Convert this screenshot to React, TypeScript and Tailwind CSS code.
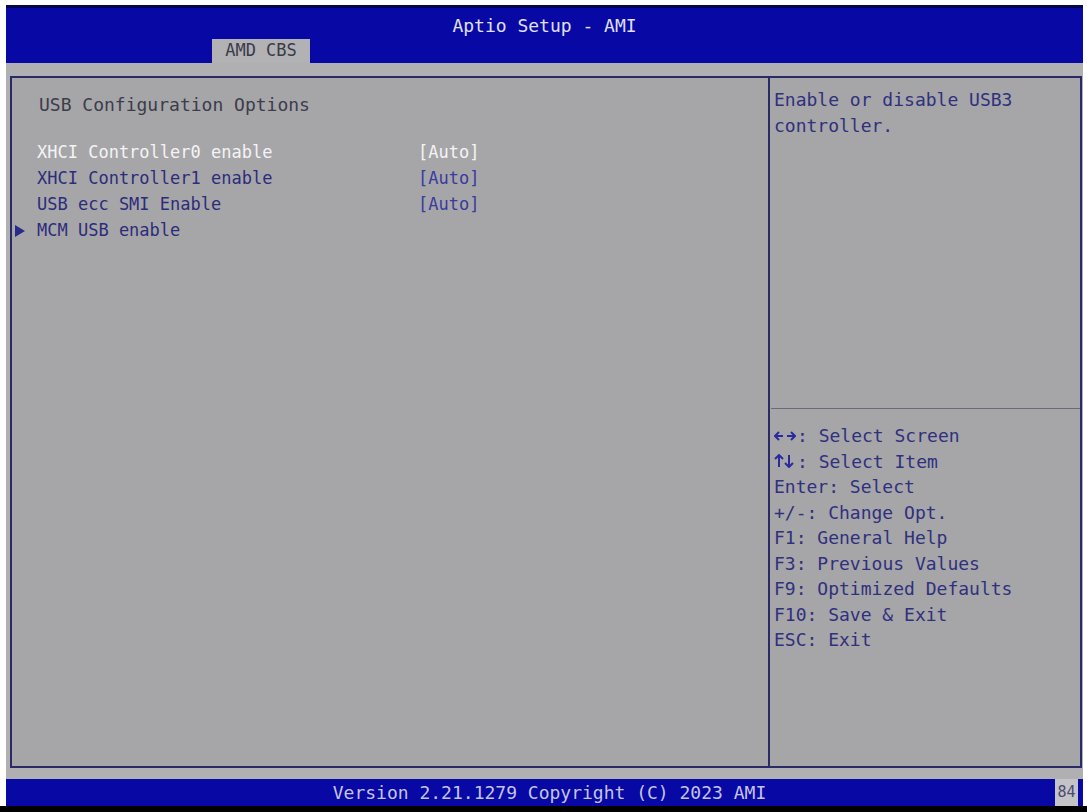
import React from "react";

const mono = { fontFamily: '"DejaVu Sans Mono", "Liberation Mono", monospace' };

const items = [
  { label: "XHCI Controller0 enable", value: "[Auto]", selected: true },
  { label: "XHCI Controller1 enable", value: "[Auto]" },
  { label: "USB ecc SMI Enable", value: "[Auto]" },
  { label: "MCM USB enable", value: "", sub: true },
];

function LR() {
  return (
    <svg width="22" height="12" viewBox="0 0 22 12" className="mr-[1px]">
      <g fill="none" stroke="#2a2aa0" strokeWidth="2">
        <path d="M1 6h8M5 2L1 6l4 4" />
        <path d="M13 6h8M17 2l4 4-4 4" />
      </g>
    </svg>
  );
}

function UD() {
  return (
    <svg width="22" height="14" viewBox="0 0 22 14" className="mr-[1px]">
      <g fill="none" stroke="#2a2aa0" strokeWidth="2">
        <path d="M5 13V1M1 5l4-4 4 4" />
        <path d="M15 1v12M11 9l4 4 4-4" />
      </g>
    </svg>
  );
}

const help: [string, string, number][] = [
  ["lr", ": Select Screen", 1],
  ["ud", ": Select Item", 2],
  ["Enter", ": Select", 0],
  ["+/-", ": Change Opt.", 0],
  ["F1", ": General Help", 0],
  ["F3", ": Previous Values", 0],
  ["F9", ": Optimized Defaults", 0],
  ["F10", ": Save & Exit", 0],
  ["ESC", ": Exit", 0],
];

export default function App() {
  return (
    <div className="w-[1087px] h-[812px] bg-white flex flex-col overflow-hidden" style={mono}>
      <div className="h-[806px] pl-[6px] pr-[4px] pt-[5px] flex flex-col">
        {/* Top bar */}
        <div className="h-[58px] bg-[#0808a4] border-t-[3px] border-[#06064a] flex flex-col">
          <div className="h-[31px] pt-[4px] flex items-center justify-center text-[18px] text-[#e0e0f4]">
            Aptio Setup - AMI
          </div>
          <div className="h-[24px] pl-[206px] flex">
            <div className="w-[98px] h-[24px] bg-[#b2b2b4] flex items-center justify-center text-[17px] text-[#3a3a4a]">
              AMD CBS
            </div>
          </div>
        </div>

        {/* Gray body */}
        <div className="flex-1 bg-[#b0b0b2] pt-[13px] pl-[4px] pr-[1px] pb-[11px] flex">
          <div className="flex-1 border-2 border-[#2a2a66] bg-[#a6a6a8] flex">
            {/* Left panel */}
            <div className="w-[756px] pt-[13px] flex flex-col">
              <div className="h-[26px] pl-[27px] flex items-center text-[18px] text-[#3c3c4c]">
                USB Configuration Options
              </div>
              <div className="mt-[23px] flex flex-col">
                {items.map((it) => (
                  <div key={it.label} className="h-[26px] flex items-center">
                    <div className="w-[25px] pl-[3px] flex items-center">
                      {it.sub && (
                        <svg width="10" height="12" viewBox="0 0 10 12">
                          <polygon points="0,0 10,6 0,12" fill="#2a2a8a" />
                        </svg>
                      )}
                    </div>
                    <div
                      className={
                        it.selected
                          ? "w-[381px] text-[17px] text-[#f4f4f6]"
                          : "w-[381px] text-[17px] text-[#2c2c7c]"
                      }
                    >
                      {it.label}
                    </div>
                    <div
                      className={
                        it.selected
                          ? "text-[17px] text-[#f4f4f6]"
                          : "text-[17px] text-[#3a3aa0]"
                      }
                    >
                      {it.value}
                    </div>
                  </div>
                ))}
              </div>
            </div>

            {/* Right panel */}
            <div className="flex-1 border-l-2 border-[#2a2a66] flex flex-col">
              <div className="h-[330px] pt-[9px] pl-[4px] text-[18px] leading-[26px] text-[#30307e]">
                <div>Enable or disable USB3</div>
                <div>controller.</div>
              </div>
              <div className="h-[1px] bg-[#6a6a78] ml-[1px]"></div>
              <div className="pt-[14px] pl-[4px] flex flex-col">
                {help.map(([k, v, kind]) => (
                  <div key={k} className="h-[25.5px] flex items-center text-[18px] text-[#30307e] whitespace-pre">
                    {kind === 1 ? <LR /> : kind === 2 ? <UD /> : <span>{k}</span>}
                    <span>{v}</span>
                  </div>
                ))}
              </div>
            </div>
          </div>
        </div>

        {/* Footer */}
        <div className="h-[27px] bg-[#0808a4] relative flex items-center justify-center pl-[10px] text-[18px] text-[#c4c4e8]">
          Version 2.21.1279 Copyright (C) 2023 AMI
          <div className="absolute right-[5px] top-0 h-[27px] w-[23px] bg-[#c4c4c8] flex items-center justify-center text-[15px] text-[#4a4a70]">
            84
          </div>
        </div>
      </div>
      <div className="h-[6px] bg-black"></div>
    </div>
  );
}
